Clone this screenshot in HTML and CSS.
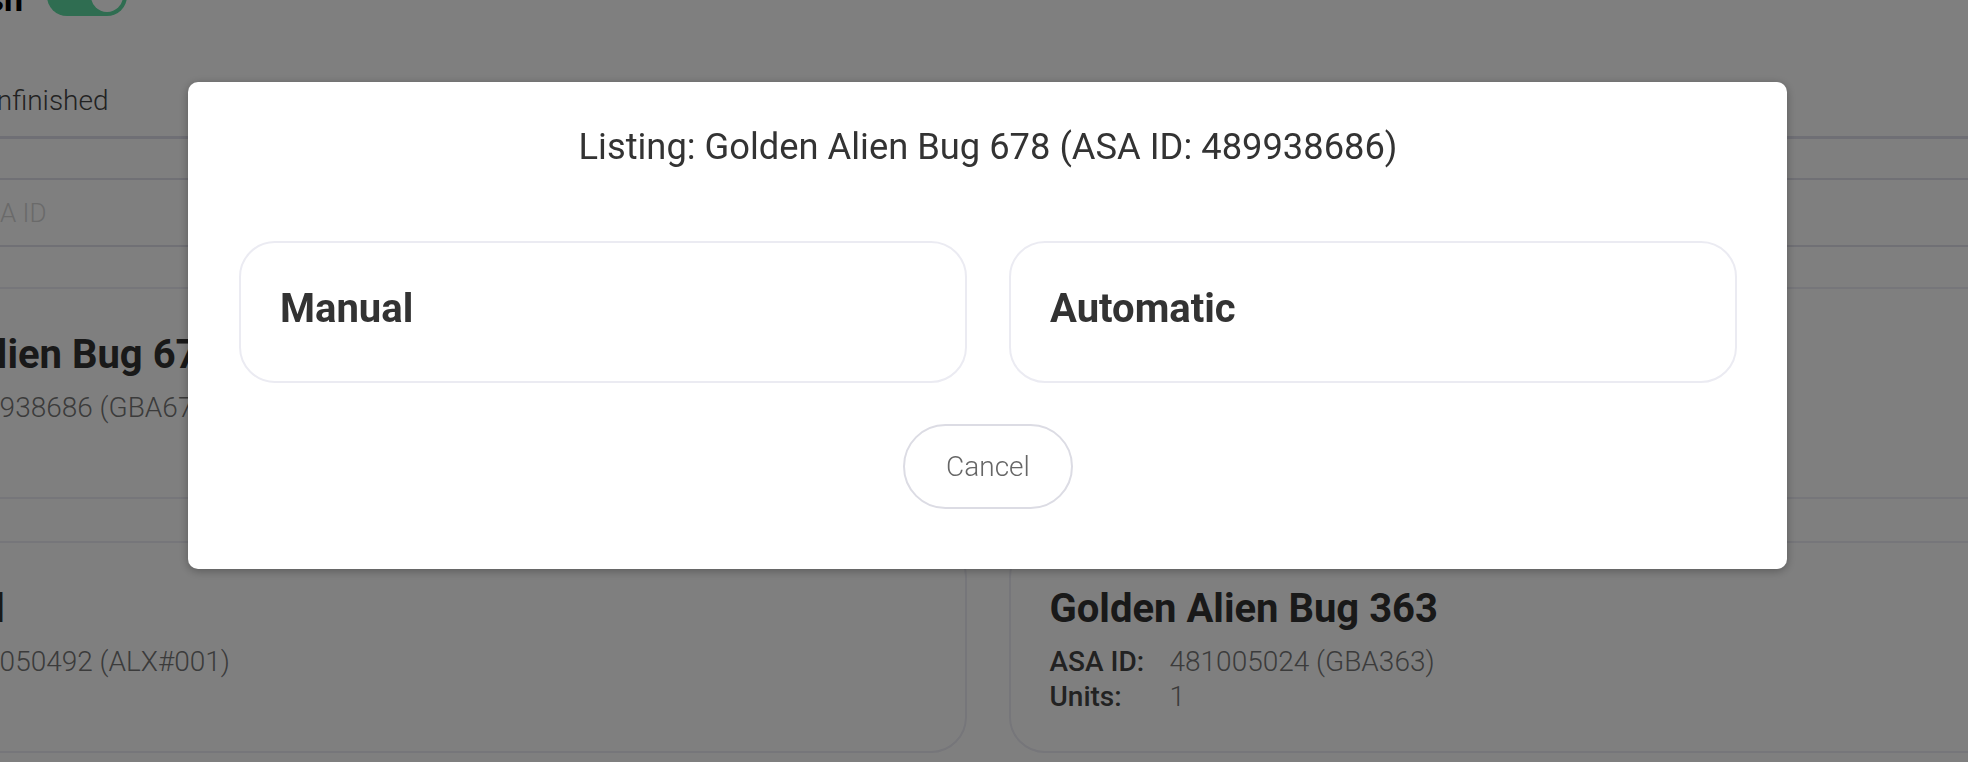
FILE: index.html
```html
<!DOCTYPE html>
<html lang="en">
<head>
<meta charset="utf-8">
<title>Listing</title>
<link rel="stylesheet" href="styles.css">
</head>
<body>
<div class="page">
  <div class="header">
    <span class="header-label">Auto refresh</span>
    <span class="toggle"><span class="knob"></span></span>
  </div>
  <div class="tabs">
    <span class="tab">Finished</span>
    <span class="tab">Unfinished</span>
  </div>
  <input class="search" type="text" placeholder="Search by ASA ID">
  <div class="grid">
    <div class="card">
      <h3 class="card-title">Golden Alien Bug 678</h3>
      <div class="details">
        <span class="label">ASA ID:</span><span class="value">489938686 (GBA678)</span>
      </div>
    </div>
    <div class="card">
      <h3 class="card-title">Golden Alien Bug 512</h3>
      <div class="details">
        <span class="label">ASA ID:</span><span class="value">489936120 (GBA512)</span>
        <span class="label">Units:</span><span class="value">1</span>
      </div>
    </div>
    <div class="card">
      <h3 class="card-title">Alien Doll</h3>
      <div class="details">
        <span class="label">ASA ID:</span><span class="value">481050492 (ALX#001)</span>
      </div>
    </div>
    <div class="card">
      <h3 class="card-title">Golden Alien Bug 363</h3>
      <div class="details">
        <span class="label">ASA ID:</span><span class="value">481005024 (GBA363)</span>
        <span class="label">Units:</span><span class="value">1</span>
      </div>
    </div>
  </div>
</div>

<div class="overlay">
  <div class="modal">
    <h2 class="modal-title">Listing: Golden Alien Bug 678 (ASA ID: 489938686)</h2>
    <div class="options">
      <button class="option" type="button">Manual</button>
      <button class="option" type="button">Automatic</button>
    </div>
    <button class="cancel" type="button">Cancel</button>
  </div>
</div>
</body>
</html>
```

FILE: styles.css
```css
html, body {
  margin: 0;
  padding: 0;
  height: 100%;
  overflow: hidden;
}

body {
  width: 1968px;
  height: 762px;
  background: #ffffff;
  font-family: Roboto, "Liberation Sans", Arial, sans-serif;
}

/* ---------- background page ---------- */
.page {
  width: 2391px;
  margin-left: -208px;
  margin-top: -24px;
}

.header {
  display: flex;
  align-items: center;
  gap: 24px;
  height: 40px;
  padding-left: 41px;
}

.header-label {
  font-size: 34px;
  font-weight: 700;
  color: #000;
  line-height: 40px;
  position: relative;
  top: 3px;
}

.toggle {
  width: 80px;
  height: 40px;
  box-sizing: border-box;
  padding: 0 4px;
  border-radius: 20px;
  background: #5edba2;
  display: flex;
  align-items: center;
  justify-content: flex-end;
}

.knob {
  width: 32px;
  height: 32px;
  border-radius: 50%;
  background: #ffffff;
}

.tabs {
  display: flex;
  gap: 42px;
  padding-left: 41px;
  margin-top: 44px;
  border-bottom: 3px solid #dedeeb;
}

.tab {
  font-size: 28px;
  font-weight: 300;
  line-height: 33px;
  color: #444;
  padding: 24px 0 19px;
}

.search {
  display: block;
  width: 100%;
  height: 69px;
  box-sizing: border-box;
  margin: 39px 0 0;
  padding: 0 0 0 56px;
  border: 2px solid #e0e0ea;
  border-radius: 12px;
  background: #fff;
  font-family: Roboto, "Liberation Sans", Arial, sans-serif;
  font-size: 26px;
  font-weight: 300;
  outline: none;
}

.search::placeholder {
  color: #d4d4d4;
}

.grid {
  display: grid;
  grid-template-columns: 1fr 1fr;
  gap: 42px;
  margin-top: 40px;
}

.card {
  border: 2px solid #ececf4;
  border-radius: 36px;
  padding: 42px 39px 37px;
}

.card-title {
  margin: 0;
  font-size: 40px;
  line-height: 47px;
  font-weight: 700;
  color: #333;
}

.details {
  display: grid;
  grid-template-columns: 120px 1fr;
  margin-top: 12px;
  font-size: 28px;
  line-height: 35px;
}

.label {
  color: #444;
  font-weight: 500;
}

.value {
  color: #777;
  font-weight: 300;
}

/* ---------- modal ---------- */
.overlay {
  position: fixed;
  inset: 0;
  background: rgba(0, 0, 0, 0.5);
  display: flex;
  align-items: flex-start;
  padding: 82px 0 0 188px;
  box-sizing: border-box;
}

.modal {
  width: 1599px;
  box-sizing: border-box;
  padding: 44px 50px 60px 51px;
  background: #fff;
  border-radius: 10px;
  box-shadow: 0 2px 10px rgba(0, 0, 0, 0.3);
  display: flex;
  flex-direction: column;
  align-items: center;
}

.modal-title {
  margin: 0 0 73px;
  font-size: 36.3px;
  line-height: 42px;
  font-weight: 400;
  color: #333;
}

.options {
  width: 100%;
  display: grid;
  grid-template-columns: 1fr 1fr;
  gap: 42px;
}

.option {
  border: 2px solid #ebebf2;
  border-radius: 36px;
  padding: 42px 39px 49px;
  background: #fff;
  text-align: left;
  font-family: Roboto, "Liberation Sans", Arial, sans-serif;
  font-size: 40px;
  line-height: 47px;
  font-weight: 700;
  color: #333;
}

.cancel {
  margin-top: 41px;
  border: 2px solid #dcdce4;
  border-radius: 999px;
  background: #fff;
  padding: 24px 41px;
  font-family: Roboto, "Liberation Sans", Arial, sans-serif;
  font-size: 28px;
  line-height: 33px;
  font-weight: 300;
  color: #666;
}
```
